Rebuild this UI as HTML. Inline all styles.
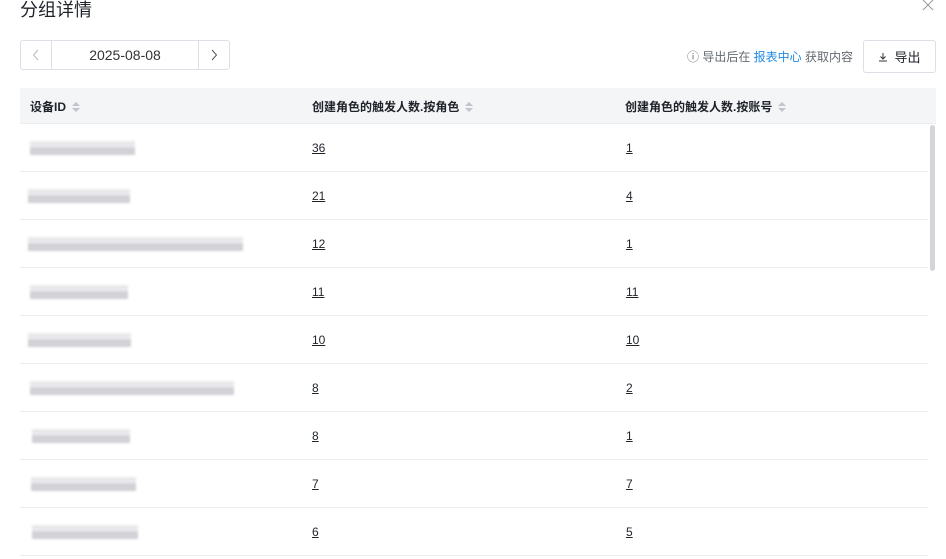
<!DOCTYPE html>
<html><head><meta charset="utf-8"><style>
*{margin:0;padding:0;box-sizing:border-box}
body{width:946px;height:559px;overflow:hidden;background:#fff;font-family:"Liberation Sans","Noto Sans CJK SC",sans-serif;color:#1f2329;position:relative}
.title{position:absolute;left:20px;top:-4px;font-size:18px;color:#1f2329}
.close{position:absolute;left:921px;top:-2px;width:14px;height:14px}
.dp{position:absolute;left:20px;top:40px;width:210px;height:30px;border:1px solid #dcdfe6;border-radius:3px;display:flex;font-size:14px;color:#333}
.dp .a{width:31px;border-right:1px solid #dcdfe6;display:flex;align-items:center;justify-content:center}
.dp .a.r{border-right:none;border-left:1px solid #dcdfe6}
.dp .m{flex:1;display:flex;align-items:center;justify-content:center}
.tip{position:absolute;left:687px;top:48px;font-size:12px;color:#646a73}
.tip b{font-weight:normal;color:#1e88e5}
.btn{position:absolute;left:863px;top:40px;width:73px;height:33px;border:1px solid #dcdfe6;border-radius:3px;font-size:13px;display:flex;align-items:center;justify-content:center;gap:6px;color:#1f2329}
.hd{position:absolute;left:20px;top:88px;width:916px;height:36px;background:#f4f5f7;border-bottom:1px solid #ebedf0;font-size:12px;font-weight:bold}
.hd span{position:absolute;top:10px}
.s{display:inline-block;vertical-align:middle;margin-left:6px;width:8px;height:10px;position:relative;top:-1px}
.s:before,.s:after{content:"";position:absolute;left:0;border-left:4px solid transparent;border-right:4px solid transparent}
.s:before{top:0;border-bottom:4px solid #c0c4cc}
.s:after{bottom:0;border-top:4px solid #c0c4cc}
.row{position:absolute;left:20px;width:908px;height:48px;border-bottom:1px solid #ebedf0;font-size:12px}
.row u{position:absolute;top:17px;color:#1f2329}
.bl{position:absolute;top:17px;height:14px;filter:blur(1px);background:linear-gradient(#e4e5e8 0 45%,#c9cacf 45% 100%);opacity:.85}
.sb{position:absolute;left:930px;top:125px;width:5px;height:146px;background:#d4d5d8;border-radius:3px}
</style></head><body>
<div class="title">分组详情</div>
<svg class="close" viewBox="0 0 14 14"><path d="M2 2L12 12M12 2L2 12" stroke="#999" stroke-width="1"/></svg>
<div class="dp"><div class="a"><svg width="8" height="12" viewBox="0 0 8 12"><path d="M6 1L1.5 6L6 11" stroke="#bbb" fill="none"/></svg></div><div class="m">2025-08-08</div><div class="a r"><svg width="8" height="12" viewBox="0 0 8 12"><path d="M2 1L6.5 6L2 11" stroke="#555" fill="none"/></svg></div></div>
<div class="tip">ⓘ 导出后在 <b>报表中心</b> 获取内容</div>
<div class="btn"><svg width="10" height="10" viewBox="0 0 10 10"><path d="M5 1V7M2.5 4.5L5 7L7.5 4.5M1 9H9" stroke="#333" fill="none"/></svg>导出</div>
<div class="hd"><span style="left:10px">设备ID<i class="s"></i></span><span style="left:292px">创建角色的触发人数.按角色<i class="s"></i></span><span style="left:605px">创建角色的触发人数.按账号<i class="s"></i></span></div>
<div class="sb"></div>
<div class="row" style="top:124px"><div class="bl" style="left:10px;width:105px"></div><u style="left:292px">36</u><u style="left:606px">1</u></div>
<div class="row" style="top:172px"><div class="bl" style="left:8px;width:102px"></div><u style="left:292px">21</u><u style="left:606px">4</u></div>
<div class="row" style="top:220px"><div class="bl" style="left:8px;width:215px"></div><u style="left:292px">12</u><u style="left:606px">1</u></div>
<div class="row" style="top:268px"><div class="bl" style="left:10px;width:98px"></div><u style="left:292px">11</u><u style="left:606px">11</u></div>
<div class="row" style="top:316px"><div class="bl" style="left:8px;width:103px"></div><u style="left:292px">10</u><u style="left:606px">10</u></div>
<div class="row" style="top:364px"><div class="bl" style="left:10px;width:204px"></div><u style="left:292px">8</u><u style="left:606px">2</u></div>
<div class="row" style="top:412px"><div class="bl" style="left:12px;width:98px"></div><u style="left:292px">8</u><u style="left:606px">1</u></div>
<div class="row" style="top:460px"><div class="bl" style="left:11px;width:105px"></div><u style="left:292px">7</u><u style="left:606px">7</u></div>
<div class="row" style="top:508px"><div class="bl" style="left:12px;width:106px"></div><u style="left:292px">6</u><u style="left:606px">5</u></div>
</body></html>
